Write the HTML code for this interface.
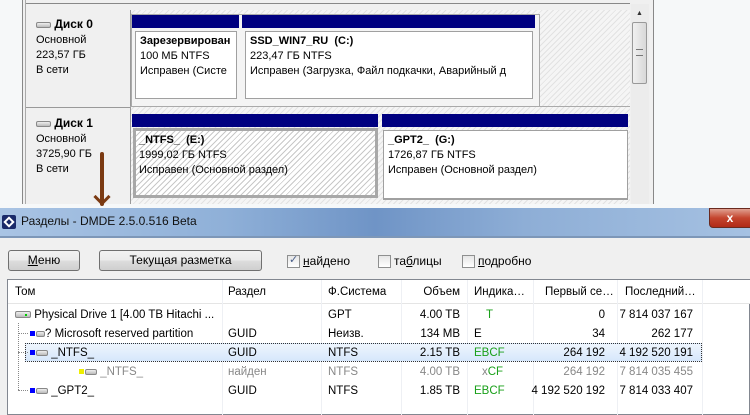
<!DOCTYPE html><html><head><meta charset="utf-8"><style>
*{margin:0;padding:0;box-sizing:border-box}
body{width:750px;height:415px;overflow:hidden;position:relative;background:#f6f8f9;font-family:"Liberation Sans","DejaVu Sans",sans-serif;font-size:11px;color:#000}
.a{position:absolute}
.hatch{background:repeating-linear-gradient(135deg,#fff 0 3px,#c8c8c8 3px 4px)}
.navy{background:#000080}
.pbox{background:#fff;border:1px solid #a0a0a0;line-height:15px;padding:2px 4px;overflow:hidden;white-space:nowrap}
.row{position:absolute;left:8px;width:739px;height:19px;line-height:19px;font-size:11.5px}
.row>span{position:absolute;white-space:nowrap}
.btn{position:absolute;height:21px;border:1px solid #707070;border-radius:3px;background:linear-gradient(#f2f2f2,#ebebeb 50%,#dddddd 51%,#cfcfcf);text-align:center;line-height:19px;font-size:12px}
.cb{position:absolute;width:13px;height:13px;border:1px solid #8e8f8f;background:linear-gradient(#e6e6e6,#fff)}
.lbl{position:absolute;font-size:12px}
.di{display:inline-block;width:17px;height:7px;border:1px solid #888;border-radius:2px;background:linear-gradient(#eee,#bbb);vertical-align:middle;position:relative}
.sq{display:inline-block;width:5px;height:5px;vertical-align:middle;margin-right:1px}
</style></head><body>
<div class="a" style="left:22px;top:0;width:632px;height:204px;background:#f0f0f0;border-left:1px solid #888;border-right:1px solid #888"></div>
<div class="a" style="left:25px;top:0;width:1px;height:204px;background:#aaa"></div>
<div class="a" style="left:26px;top:3px;width:604px;height:1px;background:#888"></div>
<div class="a hatch" style="left:130px;top:10px;width:500px;height:194px;opacity:.35"></div>
<div class="a" style="left:26px;top:10px;width:104px;height:97px;background:#f0f0f0"></div>
<div class="a" style="left:26px;top:107px;width:104px;height:97px;background:#f0f0f0;border-top:1px solid #999"></div>
<div class="a" style="left:130px;top:10px;width:1px;height:194px;background:#999"></div>
<div class="a" style="left:130px;top:106px;width:500px;height:1px;background:#aaa"></div>
<div class="a" style="left:36px;top:17px;font-size:11px;line-height:15px"><i class="di" style="width:15px;height:6px"></i><b style="font-size:12px"> Диск 0</b><br>Основной<br>223,57 ГБ<br>В сети</div>
<div class="a" style="left:36px;top:116px;font-size:11px;line-height:15px"><i class="di" style="width:15px;height:6px"></i><b style="font-size:12px"> Диск 1</b><br>Основной<br>3725,90 ГБ<br>В сети</div>
<div class="a" style="left:131px;top:14px;width:409px;height:93px;border:1px solid #aaa;background:#f4f4f4"></div>
<div class="a navy" style="left:132px;top:15px;width:107px;height:13px"></div>
<div class="a navy" style="left:242px;top:15px;width:293px;height:13px"></div>
<div class="a pbox" style="left:135px;top:31px;width:102px;height:68px"><b>Зарезервирован</b><br>100 МБ NTFS<br>Исправен (Систе</div>
<div class="a pbox" style="left:245px;top:31px;width:288px;height:68px"><b>SSD_WIN7_RU&nbsp; (C:)</b><br>223,47 ГБ NTFS<br>Исправен (Загрузка, Файл подкачки, Аварийный д</div>
<div class="a navy" style="left:132px;top:114px;width:246px;height:13px"></div>
<div class="a navy" style="left:382px;top:114px;width:246px;height:13px"></div>
<div class="a hatch" style="left:133px;top:128px;width:245px;height:70px;border:3px solid #a8a8a8;line-height:15px;padding:2px 3px"><b>_NTFS_&nbsp; (E:)</b><br>1999,02 ГБ NTFS<br>Исправен (Основной раздел)</div>
<div class="a pbox" style="left:383px;top:130px;width:245px;height:70px;border-width:1px 1px 2px 1px"><b>_GPT2_&nbsp; (G:)</b><br>1726,87 ГБ NTFS<br>Исправен (Основной раздел)</div>
<div class="a" style="left:631px;top:4px;width:18px;height:200px;background:#ececec"></div>
<div class="a" style="left:636px;top:10px;font-size:7px;color:#333">▲</div>
<div class="a" style="left:632px;top:22px;width:15px;height:62px;border:1px solid #999;border-radius:2px;background:linear-gradient(90deg,#f0f0f0,#d8d8d8)"></div>
<div class="a" style="left:636px;top:49px;width:7px;height:7px;border-top:1px solid #777;border-bottom:1px solid #777"></div>
<div class="a" style="left:100px;top:152px;width:4px;height:54px;background:#7b3a12;border-radius:2px"></div>
<div class="a" style="left:93px;top:198px;width:10px;height:3px;background:#7b3a12;transform:rotate(45deg)"></div>
<div class="a" style="left:101px;top:198px;width:10px;height:3px;background:#7b3a12;transform:rotate(-45deg)"></div>
<div class="a" style="left:0;top:208px;width:750px;height:30px;background:linear-gradient(90deg,#a9c4e4 0%,#8fb0d8 30%,#6f94c6 50%,#8eaed6 70%,#a5c1e2 100%)"></div>
<div class="a" style="left:0;top:236px;width:750px;height:2px;background:#7d97b8"></div>
<div class="a" style="left:2px;top:215px;width:14px;height:14px;background:#1a2a6a;border-radius:2px"></div>
<div class="a" style="left:5px;top:218px;width:8px;height:8px;border:2px solid #fff;transform:rotate(45deg)"></div>
<div class="a" style="left:21px;top:214px;font-size:12px;color:#111">Разделы - DMDE 2.5.0.516 Beta</div>
<div class="a" style="left:709px;top:208px;width:42px;height:20px;background:linear-gradient(#e0a090,#c4442e 50%,#b02a18);border:1px solid #6a2a20;border-radius:0 0 0 4px;color:#fff;font-weight:bold;text-align:center;line-height:18px;font-size:12px">x</div>
<div class="a" style="left:0;top:238px;width:750px;height:177px;background:#f0f0f0"></div>
<div class="btn" style="left:8px;top:250px;width:72px"><u>М</u>еню</div>
<div class="btn" style="left:99px;top:250px;width:163px">Текущая разметка</div>
<div class="cb" style="left:287px;top:255px"><span style="position:absolute;left:1px;top:-3px;font-size:11px;color:#4a5f8a">✓</span></div>
<div class="lbl" style="left:303px;top:254px"><u>н</u>айдено</div>
<div class="cb" style="left:378px;top:255px"></div>
<div class="lbl" style="left:394px;top:254px">та<u>б</u>лицы</div>
<div class="cb" style="left:462px;top:255px"></div>
<div class="lbl" style="left:478px;top:254px"><u>п</u>одробно</div>
<div class="a" style="left:7px;top:279px;width:743px;height:136px;background:#fff;border:1px solid #828790"></div>
<div class="a" style="left:8px;top:280px;width:742px;height:24px;background:#fff;border-bottom:1px solid #e5e5e5"></div>
<div class="a" style="left:222px;top:280px;width:1px;height:135px;background:#eef0f4"></div>
<div class="a" style="left:321px;top:280px;width:1px;height:135px;background:#eef0f4"></div>
<div class="a" style="left:401px;top:280px;width:1px;height:135px;background:#eef0f4"></div>
<div class="a" style="left:467px;top:280px;width:1px;height:135px;background:#eef0f4"></div>
<div class="a" style="left:533px;top:280px;width:1px;height:135px;background:#eef0f4"></div>
<div class="a" style="left:617px;top:280px;width:1px;height:135px;background:#eef0f4"></div>
<div class="a" style="left:702px;top:280px;width:1px;height:135px;background:#eef0f4"></div>
<div class="row" style="top:283px"><span style="left:7px">Том</span><span style="left:220px">Раздел</span><span style="left:320px">Ф.Система</span><span style="right:287px">Объем</span><span style="left:466px">Индика…</span><span style="left:537px">Первый се…</span><span style="left:617px">Последний…</span></div>
<div class="a" style="left:25px;top:343px;width:677px;height:19px;background:linear-gradient(#eef5fd,#d6e7fb);border:1px dotted #333"></div>
<div class="a" style="left:18px;top:323px;width:1px;height:67px;border-left:1px dotted #888"></div>
<div class="a" style="left:18px;top:333px;width:10px;border-top:1px dotted #888"></div>
<div class="a" style="left:18px;top:352px;width:10px;border-top:1px dotted #888"></div>
<div class="a" style="left:18px;top:390px;width:10px;border-top:1px dotted #888"></div>
<div class="row" style="top:306px"><span style="left:7px"><i class="di" style="width:16px"><i style="position:absolute;left:9px;top:2px;width:2px;height:2px;background:#0c0"></i></i> Physical Drive 1 [4.00 TB Hitachi ...</span><span style="left:320px">GPT</span><span style="right:287px">4.00 TB</span><span style="left:478px;color:#1aa01a">T</span><span style="right:142px">0</span><span style="right:54px">7 814 037 167</span></div>
<div class="row" style="top:325px"><span style="left:22px"><i class="sq" style="background:#00f"></i><i class="di" style="width:9px;height:6px"></i>? Microsoft reserved partition</span><span style="left:220px">GUID</span><span style="left:320px">Неизв.</span><span style="right:287px">134 MB</span><span style="left:466px">E</span><span style="right:142px">34</span><span style="right:54px">262 177</span></div>
<div class="row" style="top:344px"><span style="left:22px"><i class="sq" style="background:#00f"></i><i class="di" style="width:12px;height:6px"></i> _NTFS_</span><span style="left:220px">GUID</span><span style="left:320px">NTFS</span><span style="right:287px">2.15 TB</span><span style="left:466px;color:#1aa01a">EBCF</span><span style="right:142px">264 192</span><span style="right:54px">4 192 520 191</span></div>
<div class="row" style="top:363px;color:#888"><span style="left:71px"><i class="sq" style="background:#ee0"></i><i class="di" style="width:12px;height:6px"></i> _NTFS_</span><span style="left:220px">найден</span><span style="left:320px">NTFS</span><span style="right:287px">4.00 TB</span><span style="left:474px">x<b style="font-weight:normal;color:#1aa01a">CF</b></span><span style="right:142px">264 192</span><span style="right:54px">7 814 035 455</span></div>
<div class="row" style="top:382px"><span style="left:22px"><i class="sq" style="background:#00f"></i><i class="di" style="width:12px;height:6px"></i> _GPT2_</span><span style="left:220px">GUID</span><span style="left:320px">NTFS</span><span style="right:287px">1.85 TB</span><span style="left:466px;color:#1aa01a">EBCF</span><span style="right:142px">4 192 520 192</span><span style="right:54px">7 814 033 407</span></div>
</body></html>
